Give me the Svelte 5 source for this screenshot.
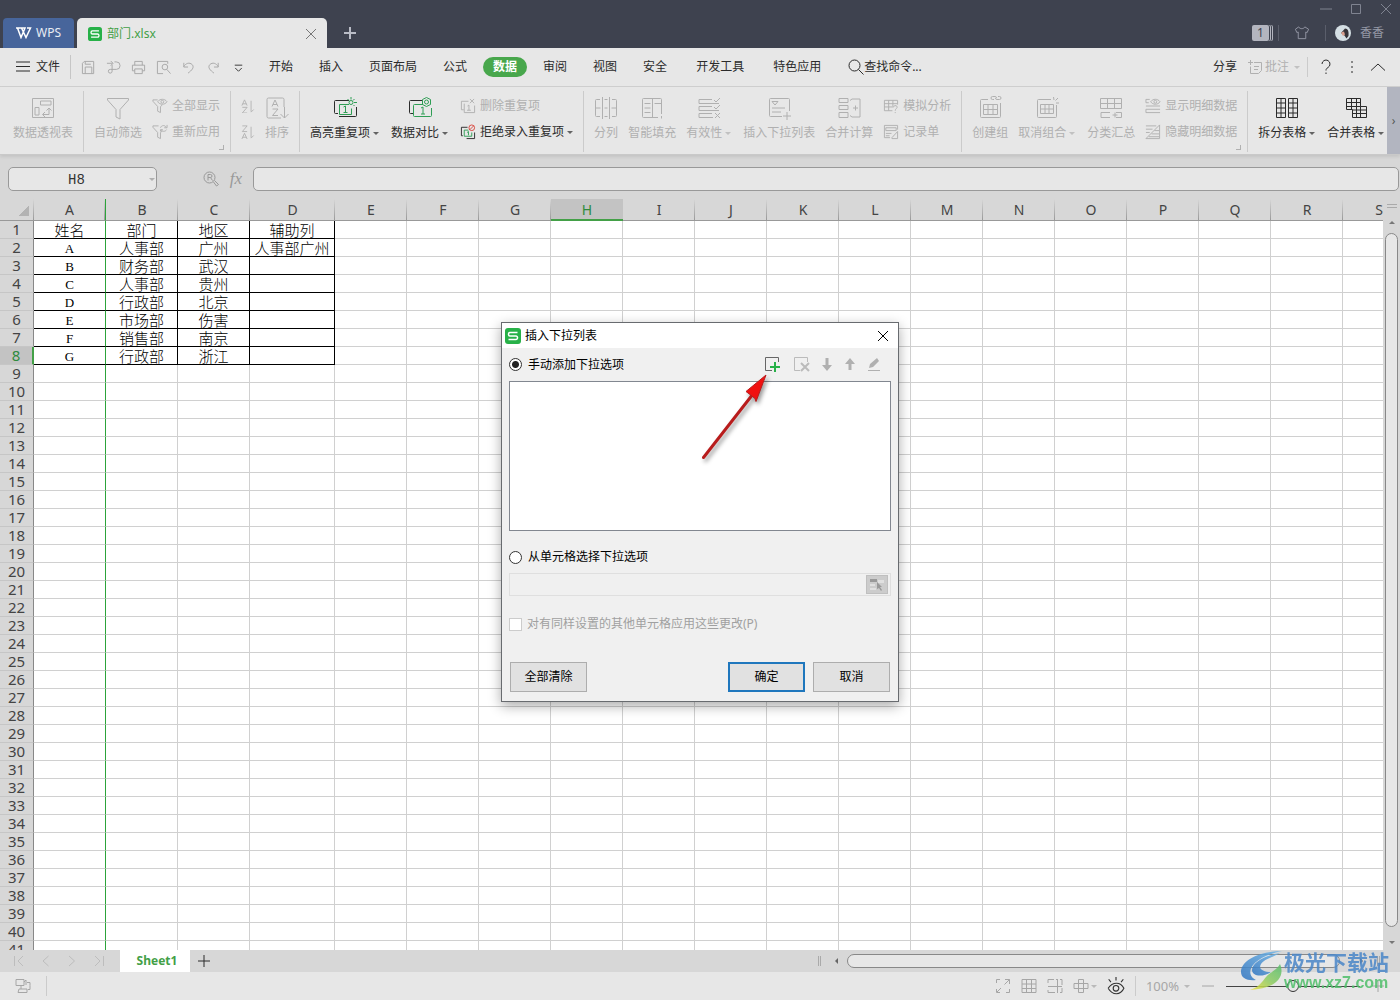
<script lang="ts">
    type Stroke = [string, string?];

    const icons: Record<string, Stroke[]> = {
        menu: [["M1 3h14M1 7.500h14M1 12h14"]],
        save: [["M1.500 14.500V3.500l2-2h10v13zM4.500 14.500v-7h7v7M4.500 1.500v3h6"]],
        export: [["M1 3.500h6M5 1l2.500 2.500L5 6M9 2h2a3.500 3.500 0 0 1 0 8H4.500a2 2 0 1 0 2 2V5"]],
        print: [["M4 5.500v-4h8v4M4 11.500H1.500v-6h13v6H12M4 9.500h8v5H4z"]],
        preview: [["M12.500 4V1.500h-11v13h6M12.500 7.500a3 3 0 1 1-6 0a3 3 0 1 1 6 0M11.500 10l4 4.500"]],
        undo: [["M3 3v4.500h4.500M3 7C5 3.500 9 2 12 5c2.500 3-.5 6-4.500 9"]],
        redo: [["M13 3v4.500H8.500M13 7C11 3.500 7 2 4 5c-2.500 3 .5 6 4.500 9"]],
        custom: [["M4 5.500h8M4.500 8.500l3.500 3.500l3.500-3.500"]],
        search: [["M12 6.500a5.500 5.500 0 1 1-11 0a5.500 5.500 0 1 1 11 0M10.500 10.500L15.500 15.500"]],
        comment: [["M7 3.500h7.500v8l-3 3h-8v-7M1 3.500h5M3.500 1v5M7 7.500h5M7 10.500h4"]],
        help: [["M4 5a4 4 0 1 1 6 3.500c-1.500 1-2 1.500-2 3M8 13.500v1.500"]],
        more: [["M8 2v2M8 7v2M8 12v2"]],
        up: [["M1 11.500L8 5l7 6.500"]],
        shirt: [["M5 2L1.500 4.500L3 8l1.500-.5v7h8v-7L14 8l1.500-3.500L11.500 2c-1 2.500-5.500 2.500-6.500 0z"]],
        pivot: [
            ["M1.500 2.500h21v19h-21zM9.500 5h10.500v4H9.500zM4 11.500h4v7.500H4zM12 18.500h6v-6M14 16l-2.500 2.500L14 21M15.500 14.500L18 12l2.500 2.500"],
        ],
        filter: [["M1.500 2.500h21v1.500l-8.500 9.500v9.500l-4-2v-7.500L1.500 4z"]],
        filterShow: [["M6 2H1v1.500l5 5.500v5l3 1.500V9l2-1.500M6 4c2.500-3.500 7.500-3.500 10 0c-2.500 3.500-7.500 3.500-10 0M12.500 4a1.500 1.500 0 1 1-3 0a1.500 1.500 0 1 1 3 0"]],
        filterRedo: [["M7 2H1v1.500l5 5.500v5l3 1.500V9l2-1.500M9 4c1-3 5-3 6-.5M16 1v3h-3M15.500 6c-1 2-4 2.500-6 .5M9 8V6h2.500"]],
        sortAsc: [["M1 7.500L4 1l3 6.500M2 5.500h4M1.500 9.500H7L1.500 16H7M11.500 2v12.500M11.500 15l3-3"]],
        sortDesc: [["M1.500 1H7L1.500 7.500H7M1 16l3-6.500L7 16M2 14h4M11.500 2v12.500M11.500 15l3-3"]],
        sort: [["M19 11V3.500a1.500 1.500 0 0 0-1.500-1.500h-14A1.500 1.500 0 0 0 2 3.500v17A1.500 1.500 0 0 0 3.500 22H16M7 10.500l3-6.500l3 6.500M8 8.500h4M7.500 13h5.500l-5.500 6.500H13M19.500 11v11M15.500 18l4 4l4-4"]],
        highlight: [
            ["M16 4.500H2.500a1 1 0 0 0-1 1v11a1 1 0 0 0 1 1H5M6 20.500h16.500a1 1 0 0 0 1-1V11"],
            ["M16 8.500H6.500v10h12v-6M10.500 11l2-1v6.500M10.500 16.500h4M20 6.500a2 2 0 1 1-4 0a2 2 0 1 1 4 0M18 3.500V1M14.500 3L16 4.500M21.500 3L20 4.500M21 6.500h3M20.500 9l1 1", "green"],
        ],
        compare: [
            ["M14 4.500H2.500a1 1 0 0 0-1 1v11a1 1 0 0 0 1 1H5"],
            ["M15 8.500H6.500a1 1 0 0 0-1 1v10a1 1 0 0 0 1 1h16a1 1 0 0 0 1-1V12M18.500 1.500l4 2v5l-4 2l-4-2v-5zM20.500 6a2 2 0 1 1-4 0a2 2 0 1 1 4 0M13 12l2-1v7M13 18h4", "green"],
        ],
        dedupe: [["M9 3.500H1.500v9H4M4.500 6v9.500h11V8M8 8.500l1.500-1v5.500M7.500 13h4M10.500 1l4.500 4.500M15 1l-4.500 4.500"]],
        reject: [
            ["M8 3.500H1.500v9H3M7 15.500h8.500V9"],
            ["M9 6.500H4.500v6.500h8V9M7.500 9l1.500-1v4", "green"],
            ["M15.500 4a3 3 0 1 1-6 0a3 3 0 1 1 6 0M10.500 6l4-4", "red"],
        ],
        columns: [["M6 3.500H2.500a1 1 0 0 0-1 1v15a1 1 0 0 0 1 1H6M18 3.500h3.500a1 1 0 0 1 1 1v15a1 1 0 0 1-1 1H18M8.500 1v22M15.500 1v22M1.500 12h5M10.500 12h3M17.500 12h5M12 3.500h-1.500M12 3.500h1.500M10.500 20.500h3"]],
        smartFill: [["M21.500 18V3.500a1 1 0 0 0-1-1h-17a1 1 0 0 0-1 1v17a1 1 0 0 0 1 1H18M12.500 2.500v19M4.500 7.500h6M4.500 12h6M4.500 16.500h6M14.500 7.500h7M21.500 20v2.500"]],
        validity: [["M15 3.500H2v4h20M15 10.500H2v4h20M15 17.500H2v4h14M17 4l2 2l4-4M17 11l2 2l4-4M18 17l5 5M23 17l-5 5"]],
        dropdown: [["M22.500 15V3.500a1 1 0 0 0-1-1h-18a1 1 0 0 0-1 1v16a1 1 0 0 0 1 1H15M5 5.500h6L8 9zM5 12h13M5 16h9M20 16v8M16 20h8"]],
        consolidate: [["M2 2.500h9v4H2zM2 9.500h9v4H2zM2 16.500h9v5H2zM13 4.500l2-1.500h8v18h-8l-2-1.500M16 12h5M18.500 9.500v5"]],
        whatIf: [["M15.500 7V2.500h-14v11H10M1.500 6h14M1.500 9.500h9M6 2.500v11M10.500 2.500V9M11 10c0-2.500 4.500-2.500 4 0c-.5 1.500-2 1.500-2 3.500M13 15v1"]],
        form: [["M15.500 6V1.500h-14v13h6M3 4h11v3H3zM3 10h6M3 12.500h4M15.500 8l-6 6.500v1h6z"]],
        group: [["M10 3.500H3.500a1 1 0 0 0-1 1v16a1 1 0 0 0 1 1h18a1 1 0 0 0 1-1V7M5.500 8.500h14v10h-14zM5.500 13.500h14M10 8.500v10M15 8.500v10M16 3.500h-1.500a1.500 1.500 0 0 1 0-3H17a1.500 1.500 0 0 1 1.500 1.500M20 .5h1.500a1.500 1.500 0 0 1 0 3H19A1.500 1.500 0 0 1 17.500 2"]],
        ungroup: [["M16 3.500H3.500a1 1 0 0 0-1 1v16a1 1 0 0 0 1 1h17a1 1 0 0 0 1-1V9M5.500 8.500h13v9h-13zM5.500 13h13M10 8.500v9M14 8.500v9M18.500 1l.5 3M23 2l-2.500 2.500M24 7h-3"]],
        subtotal: [["M1.500 2.500h21v10h-21zM1.500 7.500h21M8.500 2.500v10M15.500 2.500v10M11 16.500H2v5h9M17 16.500h5.500v5H17M16 16.500v5M13.500 19h5"]],
        showDetail: [["M5 1.500H1v3.500h3M1 8.500h15M1 12h15M1 15.500h15M1 12v3.500M6 4c2.500-3.500 7.500-3.500 10 0c-2.500 3.500-7.500 3.500-10 0M12.500 4a1.500 1.500 0 1 1-3 0a1.500 1.500 0 1 1 3 0"]],
        hideDetail: [["M1 2h11M1 5.500h7M1 9h4M1 15.500L15.500 1v14.500zM10 7h5M7 10.500h8M4 13.500h11"]],
        splitTable: [["M1.500 2.500h9v19h-9zM6 2.500v19M1.500 7h9M1.500 12h9M1.500 17h9M13.500 2.500h9v19h-9zM18 2.500v19M13.500 7h9M13.500 12h9M13.500 17h9"]],
        mergeTable: [["M2.500 2.500h14v8h6v11h-14v-8h-6zM7.500 2.500v11M12.500 2.500v19M16.500 10.500v11M2.500 6.500h14M2.500 10.500h14M8.500 14h14M8.500 17.500h14"]],
        full: [["M1.500 5V1.500H5M1.500 11v3.500H5M11 14.500h3.500V11M9.500 6.500l5-5M10 1.500h4.500V6M6 10l-4 4"]],
        grid: [["M1 1.500h14v13H1zM1 6h14M1 10.500h14M5.500 1.500v13M10.500 1.500v13"]],
        page: [["M10.500 1v14M1 8.500h14M1 5V1.500h6M9 1.500h1M1 12v2.500h7M13 1.500h2V7M15 10v4.500h-2"]],
        cross: [["M5.500 1.500h5v13h-5zM1 5.500h14v5H1z"]],
        eye: [["M1 10c4-6 11-6 14 0c-3 6.500-10 6.500-14 0M10.500 10a2.500 2.500 0 1 1-5 0a2.500 2.500 0 1 1 5 0M8 3V0M3.500 4.500L1.500 2M12.500 4.500l2-2.500"]],
        task: [["M1 1.500h8v6H1zM9 4l2-2v5M12 4.500h3v3M15 7.500v4h-2M4 11h8v3.500H3zM6 7.500V11"]],
        find: [["M12 6.500a5.500 5.500 0 1 1-11 0a5.500 5.500 0 1 1 11 0M5 9.500v-6h2.500a1.500 1.500 0 0 1 0 3H5M7.500 6.500l2 3M10.500 11l3 4l2-1.500l-4-4"]],
        plus: [["M2 8h12M8 2v12"]],
        minus: [["M2 8h12"]],
        close: [["M3 3l10 10M13 3L3 13"]],
        maximize: [["M3.500 3.500h9v9h-9z"]],
        first: [["M2.500 3v10M11 3L6 8l5 5"]],
        prev: [["M10.500 3L5 8l5.500 5"]],
        next: [["M5 3l5.500 5L5 13"]],
        last: [["M13.500 3v10M5 3l5 5l-5 5"]],
    };

    const quick = ["save", "export", "print", "preview", "undo", "redo", "custom"];
    const tabs = ["开始", "插入", "页面布局", "公式", "数据", "审阅", "视图", "安全", "开发工具", "特色应用"];
    let activeTab = $state("数据");

    type Tool = { icon: string; label: string; caret?: boolean; on?: boolean };
    type Part = Tool | Tool[];
    type Group = { parts: Part[]; corner?: boolean };

    const groups: Group[] = [
        { parts: [{ icon: "pivot", label: "数据透视表" }] },
        {
            corner: true,
            parts: [
                { icon: "filter", label: "自动筛选" },
                [
                    { icon: "filterShow", label: "全部显示" },
                    { icon: "filterRedo", label: "重新应用" },
                ],
            ],
        },
        {
            parts: [
                [
                    { icon: "sortAsc", label: "" },
                    { icon: "sortDesc", label: "" },
                ],
                { icon: "sort", label: "排序" },
            ],
        },
        {
            parts: [
                { icon: "highlight", label: "高亮重复项", caret: true, on: true },
                { icon: "compare", label: "数据对比", caret: true, on: true },
                [
                    { icon: "dedupe", label: "删除重复项" },
                    { icon: "reject", label: "拒绝录入重复项", caret: true, on: true },
                ],
            ],
        },
        {
            parts: [
                { icon: "columns", label: "分列" },
                { icon: "smartFill", label: "智能填充" },
                { icon: "validity", label: "有效性", caret: true },
                { icon: "dropdown", label: "插入下拉列表" },
                { icon: "consolidate", label: "合并计算" },
                [
                    { icon: "whatIf", label: "模拟分析" },
                    { icon: "form", label: "记录单" },
                ],
            ],
        },
        {
            corner: true,
            parts: [
                { icon: "group", label: "创建组" },
                { icon: "ungroup", label: "取消组合", caret: true },
                { icon: "subtotal", label: "分类汇总" },
                [
                    { icon: "showDetail", label: "显示明细数据" },
                    { icon: "hideDetail", label: "隐藏明细数据" },
                ],
            ],
        },
        {
            parts: [
                { icon: "splitTable", label: "拆分表格", caret: true, on: true },
                { icon: "mergeTable", label: "合并表格", caret: true, on: true },
            ],
        },
    ];

    const columns = "ABCDEFGHIJKLMNOPQRS".split("");
    const rowCount = 41;
    const cells = [
        ["姓名", "部门", "地区", "辅助列"],
        ["A", "人事部", "广州", "人事部广州"],
        ["B", "财务部", "武汉", ""],
        ["C", "人事部", "贵州", ""],
        ["D", "行政部", "北京", ""],
        ["E", "市场部", "伤害", ""],
        ["F", "销售部", "南京", ""],
        ["G", "行政部", "浙江", ""],
    ];

    let dialogOpen = $state(true);
    let source = $state("manual");
    let zoom = $state(50);
</script>

{#snippet icon(name: string, size: number, box: number = size)}
    <svg class="icon" width={size} height={size} viewBox="0 0 {box} {box}" aria-hidden="true">
        {#each icons[name] as [d, color]}
            <path {d} class={color} />
        {/each}
    </svg>
{/snippet}

{#snippet logo(size: number)}
    <svg width={size} height={size} viewBox="0 0 16 16" aria-hidden="true">
        <rect width="16" height="16" rx="3" fill="#27b148" />
        <path d="M12.500 4.500H5a1.500 1.500 0 0 0-1.500 1.500v.5A1.500 1.500 0 0 0 5 8h6a1.500 1.500 0 0 1 1.500 1.500v.5a1.500 1.500 0 0 1-1.500 1.500H3.500" fill="none" stroke="#fff" stroke-width="1.500" />
    </svg>
{/snippet}

<div class="app">
    <header class="titlebar">
        <button class="wps">
            <svg width="16" height="12" viewBox="0 0 16 12" aria-hidden="true">
                <path d="M0 1h5M1.500 1l3.500 9.500L9 1h-3.500l4.500 9.500L14.500 1H11" fill="none" stroke="#fff" stroke-width="1.500" />
            </svg>
            WPS
        </button>
        <div class="doc-tab">
            {@render logo(14)}
            <span>部门.xlsx</span>
            <button aria-label="关闭">{@render icon("close", 16)}</button>
        </div>
        <button class="new-tab" aria-label="新建">{@render icon("plus", 16)}</button>
        <div class="title-right">
            <div class="window-buttons">
                <button aria-label="最小化">{@render icon("minus", 16)}</button>
                <button aria-label="最大化">{@render icon("maximize", 16)}</button>
                <button aria-label="关闭窗口">{@render icon("close", 16)}</button>
            </div>
            <div class="user">
                <span class="badge">1</span>
                <i class="rule"></i>
                <button aria-label="皮肤">{@render icon("shirt", 16, 17)}</button>
                <i class="rule"></i>
                <svg class="avatar" width="16" height="16" viewBox="0 0 16 16" aria-hidden="true">
                    <circle cx="8" cy="8" r="8" fill="#d5dfe4" />
                    <path d="M6 8l4-4.500c3 0 4 3 3.500 7.500l-2 2.500l-2-3z" fill="#363338" />
                    <path d="M6 7.500l3-1l1 3l-2 1.500z" fill="#d99f8d" />
                </svg>
                <span>香香</span>
            </div>
        </div>
    </header>

    <nav class="menubar">
        <button class="file">{@render icon("menu", 16)}文件</button>
        <div class="quick">
            {#each quick as name}
                <button class:dark={name === "custom"} aria-label={name}>{@render icon(name, 15, 16)}</button>
            {/each}
        </div>
        <div class="tabs">
            {#each tabs as tab, i}
                <button
                    class:active={tab === activeTab}
                    class:extra={i > 7}
                    onclick={() => (activeTab = tab)}><span>{tab}</span></button
                >
            {/each}
        </div>
        <button class="search">{@render icon("search", 16)}查找命令...</button>
        <div class="menu-right">
            <button>分享</button>
            <button class="off">{@render icon("comment", 16)}批注<i class="caret"></i></button>
            <i class="rule"></i>
            <button aria-label="帮助">{@render icon("help", 16)}</button>
            <button class="more" aria-label="更多">{@render icon("more", 16)}</button>
            <button aria-label="收起">{@render icon("up", 16)}</button>
        </div>
    </nav>

    <div class="ribbon">
        {#each groups as group}
            <div class="group">
                {#each group.parts as part}
                    {#if Array.isArray(part)}
                        <div class="stack">
                            {#each part as tool}
                                <button class="small" class:off={!tool.on} aria-label={tool.label || tool.icon}>
                                    {@render icon(tool.icon, tool.label ? 16 : 14, tool.label ? 17 : 16)}
                                    {#if tool.label}<span>{tool.label}</span>{/if}
                                    {#if tool.caret}<i class="caret"></i>{/if}
                                </button>
                            {/each}
                        </div>
                    {:else}
                        <button class="big" class:off={!part.on} class:wide={part.caret}>
                            {@render icon(part.icon, 24)}
                            <span>{part.label}{#if part.caret}<i class="caret"></i>{/if}</span>
                        </button>
                    {/if}
                {/each}
                {#if group.corner}<i class="corner"></i>{/if}
            </div>
        {/each}
        <button class="scroll-right" aria-label="更多工具">›</button>
    </div>

    <div class="formula">
        <div class="name-box">
            <input value="H8" aria-label="名称框" />
            <i class="caret"></i>
        </div>
        <button class="find" aria-label="浏览">{@render icon("find", 16)}</button>
        <button class="fx">fx</button>
        <input class="formula-input" aria-label="编辑栏" />
    </div>

    <main>
        <div class="sheet">
            <table>
                <colgroup>
                    <col class="col-head" />
                    {#each columns as column}
                        <col class:col-wide={column === "D"} />
                    {/each}
                </colgroup>
                <thead>
                    <tr>
                        <th class="corner-cell"></th>
                        {#each columns as column}
                            <th class:selected={column === "H"} class:frozen={column === "A"}>{column}</th>
                        {/each}
                    </tr>
                </thead>
                <tbody>
                    {#each Array(rowCount) as _, r}
                        <tr>
                            <th class:selected={r === 7}>{r + 1}</th>
                            {#each columns as column, c}
                                <td class:filled={r < 8 && c < 4} class:frozen={c === 0}>{cells[r]?.[c] ?? ""}</td>
                            {/each}
                        </tr>
                    {/each}
                </tbody>
            </table>
        </div>
        <div class="v-scroll">
            <i class="split"></i>
            <i class="arrow-up"></i>
            <i class="thumb"></i>
            <i class="arrow-down"></i>
        </div>
    </main>

    <div class="sheet-bar">
        <div class="sheet-nav">
            {#each ["first", "prev", "next", "last"] as name}
                <button aria-label={name}>{@render icon(name, 16)}</button>
            {/each}
        </div>
        <button class="sheet-tab">Sheet1</button>
        <button class="add-sheet" aria-label="新建工作表">{@render icon("plus", 16)}</button>
        <div class="h-scroll">
            <i class="grip"></i>
            <i class="arrow-left"></i>
            <i class="thumb"></i>
            <i class="arrow-right"></i>
            <i class="grip"></i>
        </div>
    </div>

    <footer>
        <button class="task" aria-label="任务">{@render icon("task", 16)}</button>
        <i class="rule"></i>
        <div class="views">
            <button aria-label="全屏">{@render icon("full", 16)}</button>
            <button aria-label="普通视图">{@render icon("grid", 16)}</button>
            <button aria-label="分页预览">{@render icon("page", 16)}</button>
            <button aria-label="阅读模式">{@render icon("cross", 16)}<i class="caret"></i></button>
            <button class="dark" aria-label="护眼模式">{@render icon("eye", 18, 16)}</button>
            <i class="rule"></i>
            <button class="percent">100%<i class="caret"></i></button>
            <button aria-label="缩小">{@render icon("minus", 16)}</button>
            <input type="range" bind:value={zoom} aria-label="缩放" />
            <button aria-label="放大">{@render icon("plus", 16)}</button>
        </div>
    </footer>

    {#if dialogOpen}
        <div class="dialog" role="dialog" aria-label="插入下拉列表">
            <div class="dialog-title">
                {@render logo(16)}
                <span>插入下拉列表</span>
                <button aria-label="关闭对话框" onclick={() => (dialogOpen = false)}>{@render icon("close", 16)}</button>
            </div>
            <div class="dialog-body">
                <div class="option-row">
                    <label><input type="radio" value="manual" bind:group={source} />手动添加下拉选项</label>
                    <div class="option-tools">
                        <button aria-label="添加">
                            <svg width="18" height="18" viewBox="0 0 18 18">
                                <path d="M9 14.500H2.500v-13h13V6" fill="none" stroke="#666" />
                                <path d="M12 6v10M7 11h10" fill="none" stroke="#27b148" stroke-width="2" />
                            </svg>
                        </button>
                        <button aria-label="删除">
                            <svg width="18" height="18" viewBox="0 0 18 18">
                                <path d="M8 14.500H2.500v-13h13V6" fill="none" stroke="#bbb" />
                                <path d="M9 7l8 8M17 7l-8 8" fill="none" stroke="#bbb" stroke-width="2" />
                            </svg>
                        </button>
                        <button aria-label="下移">
                            <svg width="12" height="18" viewBox="0 0 12 18">
                                <path d="M4.500 2h3v7H11l-5 6l-5-6h3.500z" fill="#b0b0b0" />
                            </svg>
                        </button>
                        <button aria-label="上移">
                            <svg width="12" height="18" viewBox="0 0 12 18">
                                <path d="M4.500 14h3V8H11L6 2L1 8h3.500z" fill="#b0b0b0" />
                            </svg>
                        </button>
                        <button aria-label="编辑">
                            <svg width="14" height="18" viewBox="0 0 14 18">
                                <path d="M2 12l1-4l7-6l2 3l-6 6zM1 14h12v1H1z" fill="#b0b0b0" />
                            </svg>
                        </button>
                    </div>
                </div>
                <div class="list"></div>
                <label class="cells-option"
                    ><input type="radio" value="cells" bind:group={source} />从单元格选择下拉选项</label
                >
                <div class="range">
                    <input aria-label="单元格区域" disabled />
                    <button aria-label="选择区域" disabled>
                        <svg width="16" height="14" viewBox="0 0 16 14">
                            <path d="M1 1h7v3H1z" fill="#999" />
                            <path d="M9 2h6v3H9zM1 6h5v2H1zM1 10h6v2H1z" fill="#e0e0e0" />
                            <path d="M8 4l5 5h-2l2 3l-1 1l-2-3l-2 1z" fill="#999" />
                        </svg>
                    </button>
                </div>
                <label class="apply"><input type="checkbox" disabled />对有同样设置的其他单元格应用这些更改(P)</label>
                <div class="actions">
                    <button>全部清除</button>
                    <button class="primary">确定</button>
                    <button>取消</button>
                </div>
            </div>
            <svg class="pointer" width="80" height="96" viewBox="0 0 80 96" aria-hidden="true">
                <path d="M4.500 86.500L54 23" stroke="#b81c1c" stroke-width="3" stroke-linecap="round" />
                <path d="M67 4L47 20.500L51 23.500L56 27.500L57 30.500z" fill="#f01010" stroke="#b81c1c" />
            </svg>
        </div>
    {/if}

    <div class="watermark">
        <svg width="44" height="42" viewBox="0 0 44 42" aria-hidden="true">
            <defs>
                <linearGradient id="leaf" x1="0" y1="1" x2="1" y2="0">
                    <stop offset="0" stop-color="#f0e13a" />
                    <stop offset="0.500" stop-color="#8ccb62" />
                    <stop offset="1" stop-color="#56bd6e" />
                </linearGradient>
                <linearGradient id="wing" x1="0" y1="1" x2="1" y2="0">
                    <stop offset="0" stop-color="#2f74c0" />
                    <stop offset="1" stop-color="#6fb6e8" />
                </linearGradient>
            </defs>
            <path d="M42 1C22 1 1 9 1 22c0 6 6 9 15 8C6 26 6 9 42 1z" fill="url(#wing)" />
            <path d="M40 3C26 5 12 12 12 20c0 6 10 8 19 2c-8 0-13-3-10-8c3-5 13-7 19-11z" fill="url(#wing)" />
            <path d="M40 14c6 14-6 25-30 26c9-3 12-8 16-13c4-5 10-6 14-13z" fill="url(#leaf)" />
        </svg>
        <div>
            <strong>极光下载站</strong>
            <em>www.xz7.com</em>
        </div>
    </div>
</div>

<style>
    :global(body) {
        margin: 0;
        overflow: hidden;
    }

    .app {
        position: relative;
        display: flex;
        flex-direction: column;
        height: 100vh;
        overflow: hidden;
        background: #e7e7e7;
        color: #2b2b2b;
        font-family: "Noto Sans", "Noto Sans CJK SC", sans-serif;
        font-size: 12px;
        line-height: 16px;
        white-space: nowrap;
    }

    button {
        display: flex;
        align-items: center;
        justify-content: center;
        margin: 0;
        padding: 0;
        border: 0;
        background: none;
        color: inherit;
        font: inherit;
        white-space: nowrap;
    }

    input {
        box-sizing: border-box;
        margin: 0;
        font: inherit;
    }

    .icon {
        flex: none;
        fill: none;
        stroke: currentColor;
    }

    .green {
        stroke: #2f9e55;
    }

    .red {
        stroke: #d9483f;
    }

    .off {
        color: #b0b0b0;
    }

    .dark {
        color: #333;
    }

    .rule {
        width: 1px;
        height: 20px;
        background: #cbcbcb;
    }

    .caret {
        display: inline-block;
        margin-left: 3px;
        border: 3px solid transparent;
        border-top-color: currentColor;
        border-bottom: 0;
        vertical-align: middle;
        opacity: 0.7;
    }

    .titlebar {
        display: flex;
        align-items: flex-end;
        height: 48px;
        flex: none;
        background: #3e424f;
        color: #b9bcc6;
    }

    .wps {
        gap: 4px;
        width: 71px;
        height: 30px;
        margin: 0 3px;
        border-radius: 4px 4px 0 0;
        background: #47659b;
        color: #e8ecf4;
    }

    .doc-tab {
        display: flex;
        align-items: center;
        gap: 5px;
        box-sizing: border-box;
        width: 250px;
        height: 30px;
        padding: 1px 8px 0 11px;
        border-radius: 5px 5px 0 0;
        background: #e7e7e7;
        color: #43a047;
    }

    .doc-tab button {
        margin-left: auto;
        color: #777;
    }

    .new-tab {
        width: 46px;
        height: 30px;
    }

    .new-tab .icon {
        stroke-width: 2;
    }

    .title-right {
        display: flex;
        flex-direction: column;
        margin-left: auto;
        height: 48px;
        color: #9498a5;
    }

    .window-buttons {
        display: flex;
        justify-content: flex-end;
        gap: 14px;
        height: 18px;
        padding-right: 6px;
        color: #7f8390;
    }

    .user {
        display: flex;
        align-items: center;
        gap: 9px;
        height: 30px;
        padding-right: 16px;
    }

    .user button {
        margin: 0 6px;
    }

    .user .rule {
        height: 16px;
        background: #5a5e6b;
    }

    .badge {
        width: 17px;
        border-radius: 2px;
        background: #b3b5bf;
        box-shadow: 1px 0 #3e424f, 2px 0 #b3b5bf, 3px 0 #3e424f, 4px 0 #b3b5bf;
        color: #3e424f;
        text-align: center;
    }

    .menubar {
        display: flex;
        align-items: center;
        flex: none;
        height: 38px;
        border-bottom: 1px solid #cfcfcf;
    }

    .file {
        gap: 5px;
        width: 71px;
        padding-left: 5px;
        box-sizing: border-box;
        border-right: 1px solid #c6c6c6;
        height: 24px;
    }

    .quick {
        display: flex;
        gap: 10px;
        padding: 0 10px;
        color: #a6a6a6;
    }

    .tabs {
        display: flex;
    }

    .tabs button {
        padding: 0 3px;
        height: 20px;
    }

    .tabs span {
        padding: 0 10px;
        border-radius: 10px;
        line-height: 20px;
    }

    .tabs .active span {
        background: #48a74c;
        color: #fff;
        font-weight: 700;
    }

    .tabs .extra {
        padding-left: 6px;
    }

    .search {
        margin-left: 14px;
    }

    .menu-right {
        display: flex;
        align-items: center;
        gap: 10px;
        margin-left: auto;
        padding-right: 14px;
    }

    .menu-right .off {
        gap: 2px;
    }

    .menu-right .rule {
        margin-left: -3px;
    }

    .ribbon {
        display: flex;
        flex: none;
        height: 67px;
        padding-left: 3px;
        border-bottom: 1px solid #c9c9c9;
        box-shadow: 0 2px 3px #c4c4c4;
        z-index: 1;
    }

    .group {
        position: relative;
        display: flex;
        gap: 10px;
        margin: 4px 0 2px;
        padding: 0 10px;
        border-right: 1px solid #cbcbcb;
    }

    .group:nth-last-child(2) {
        border-right: 0;
        padding-right: 0;
    }

    .big {
        flex-direction: column;
        justify-content: flex-start;
        gap: 5px;
        padding-top: 5px;
    }

    .big.wide {
        padding-right: 2px;
    }

    .stack {
        display: flex;
        flex-direction: column;
        gap: 6px;
        padding-top: 5px;
    }

    .small {
        justify-content: flex-start;
        height: 20px;
    }

    .small span {
        margin-left: 4px;
    }

    .corner {
        position: absolute;
        right: 6px;
        bottom: 2px;
        width: 4px;
        height: 4px;
        border: solid #b0b0b0;
        border-width: 0 1px 1px 0;
    }

    .scroll-right {
        width: 13px;
        margin-left: auto;
        background: #b2b5c0;
        color: #555;
    }

    .formula {
        display: flex;
        align-items: center;
        flex: none;
        height: 32px;
        padding: 8px 1px 4px 8px;
        background: #d7d7d7;
        color: #999;
    }

    .name-box {
        position: relative;
        width: 149px;
    }

    .name-box .caret {
        position: absolute;
        right: 2px;
        top: 11px;
    }

    .formula input {
        width: 100%;
        height: 24px;
        border: 1px solid #999;
        border-radius: 5px;
        background: #e7e7e7;
        color: #333;
    }

    .name-box input {
        padding: 2px 12px 0 0;
        font: 14px "Liberation Mono", monospace;
        text-align: center;
    }

    .find {
        margin-left: 46px;
    }

    .fx {
        width: 34px;
        font: italic 17px "Liberation Serif", serif;
    }

    .formula-input {
        flex: 1;
    }

    main {
        display: flex;
        flex: 1;
        min-height: 0;
        background: #d7d7d7;
    }

    .sheet {
        flex: 1;
        min-width: 0;
        overflow: hidden;
    }

    table {
        width: 1px;
        table-layout: fixed;
        border-spacing: 0;
        background: #fff;
    }

    col {
        width: 72px;
    }

    .col-head {
        width: 34px;
    }

    .col-wide {
        width: 85px;
    }

    th,
    td {
        box-sizing: border-box;
        height: 18px;
        padding: 0;
        line-height: 17px;
    }

    th {
        border-bottom: 1px solid #c6c6c6;
        background: #d7d7d7;
        color: #444;
        font-size: 15px;
        font-weight: 400;
    }

    thead th {
        height: 22px;
        border-bottom-color: #999;
        background: linear-gradient(#d7d7d7, #999) right / 1px 100% no-repeat #d7d7d7;
        font-size: 14px;
    }

    thead .corner-cell {
        background:
            linear-gradient(#d7d7d7, #999) right / 1px 100% no-repeat,
            linear-gradient(135deg, transparent 50%, #b3b3b3 50%) 18px 6px / 11px 11px no-repeat #d7d7d7;
    }

    tbody th {
        border-right: 1px solid #888;
    }

    th.selected {
        background: #c3c3c3;
        color: #2e8b3d;
    }

    thead .selected {
        border-bottom: 2px solid #43a047;
    }

    tbody .selected {
        border-right: 2px solid #43a047;
    }

    td {
        padding-top: 3px;
        border: solid #d0d0d0;
        border-width: 0 1px 1px 0;
        color: #000;
        font-family: "Liberation Serif", "Noto Sans CJK SC", serif;
        font-size: 15px;
        font-weight: 300;
        line-height: 14px;
        text-align: center;
    }

    td.filled {
        border-color: #000;
    }

    td.frozen,
    th.frozen {
        border-right: 1px solid #2ca33a;
    }

    td.frozen {
        font-size: 13px;
    }

    tr:first-child td.frozen {
        font-size: 15px;
    }

    .v-scroll {
        display: flex;
        flex-direction: column;
        align-items: center;
        width: 17px;
        padding: 5px 0 6px;
        box-sizing: border-box;
    }

    .split {
        width: 10px;
        height: 2px;
        border: solid #aaa;
        border-width: 1px 0;
    }

    .arrow-up,
    .arrow-down {
        margin: 13px 0 9px;
        border: 3px solid transparent;
        border-bottom-color: #777;
        border-top: 0;
    }

    .arrow-down {
        margin: 14px 0 0;
        border-top: 3px solid #777;
        border-bottom: 0;
    }

    .thumb {
        box-sizing: border-box;
        border: 1px solid #888;
        border-radius: 7px;
        background: #e7e7e7;
    }

    .v-scroll .thumb {
        flex: 1;
        width: 13px;
    }

    .sheet-bar {
        display: flex;
        align-items: center;
        flex: none;
        height: 22px;
        background: #d7d7d7;
    }

    .sheet-nav {
        display: flex;
        gap: 10px;
        width: 108px;
        padding-left: 12px;
        color: #bdbdbd;
    }

    .sheet-tab {
        width: 70px;
        height: 22px;
        padding-left: 4px;
        box-sizing: border-box;
        background: #fff;
        color: #43a047;
        font-weight: 700;
    }

    .add-sheet {
        width: 28px;
    }

    .h-scroll {
        display: flex;
        align-items: center;
        width: 582px;
        margin-left: auto;
        padding-right: 20px;
        box-sizing: border-box;
    }

    .h-scroll .thumb {
        flex: 1;
        height: 14px;
    }

    .grip {
        width: 1px;
        height: 10px;
        border: solid #aaa;
        border-width: 0 1px;
    }

    .arrow-left,
    .arrow-right {
        margin: 0 9px 0 14px;
        border: 3px solid transparent;
        border-right-color: #666;
        border-left: 0;
    }

    .arrow-right {
        margin: 0 14px 0 20px;
        border-left: 3px solid #666;
        border-right: 0;
    }

    footer {
        display: flex;
        align-items: center;
        flex: none;
        height: 28px;
        color: #a6a6a6;
    }

    .task {
        width: 46px;
    }

    .views {
        display: flex;
        align-items: center;
        gap: 10px;
        margin-left: auto;
        padding-right: 14px;
    }

    .views .caret {
        margin-left: 2px;
    }

    .percent {
        font-size: 13px;
    }

    .percent .caret {
        margin-left: 5px;
    }

    input[type="range"] {
        appearance: none;
        width: 134px;
        height: 14px;
        background: linear-gradient(#444, #444) center / 100% 1px no-repeat;
    }

    input[type="range"]::-webkit-slider-thumb {
        appearance: none;
        box-sizing: border-box;
        width: 12px;
        height: 12px;
        border: 1px solid #333;
        border-radius: 50%;
        background: #e7e7e7;
    }

    .dialog {
        position: absolute;
        top: 322px;
        left: 50%;
        z-index: 2;
        box-sizing: border-box;
        width: 398px;
        margin-left: -199px;
        border: 1px solid #686b6f;
        background: #f0f0f0;
        box-shadow: 0 4px 12px #0005;
        color: #000;
    }

    .dialog-title {
        display: flex;
        align-items: center;
        gap: 4px;
        height: 25px;
        padding: 0 7px 0 3px;
        background: #fff;
    }

    .dialog-title button {
        margin-left: auto;
    }

    .dialog-body {
        padding: 0 7px 9px;
    }

    .option-row {
        display: flex;
        align-items: center;
        justify-content: space-between;
        height: 33px;
    }

    .option-tools {
        display: flex;
        gap: 11px;
        padding-right: 10px;
    }

    label {
        display: flex;
        align-items: center;
        gap: 6px;
    }

    label input {
        appearance: none;
        width: 13px;
        height: 13px;
        border: 1px solid #333;
        background: #fff;
    }

    label input[type="radio"] {
        border-radius: 50%;
    }

    label input[type="radio"]:checked {
        background: radial-gradient(#222 3px, #fff 4px);
    }

    .list {
        box-sizing: border-box;
        height: 150px;
        border: 1px solid #828790;
        background: #fff;
    }

    .cells-option {
        margin-top: 18px;
    }

    .range {
        display: flex;
        align-items: center;
        box-sizing: border-box;
        height: 23px;
        margin-top: 8px;
        border: 1px solid #dfdfdf;
    }

    .range input {
        flex: 1;
        border: 0;
        background: none;
    }

    .range button {
        box-sizing: border-box;
        width: 22px;
        height: 19px;
        margin-right: 2px;
        border: 1px solid #bfbfbf;
        background: #ccc;
    }

    .apply {
        margin-top: 20px;
        gap: 5px;
        color: #a0a0a0;
    }

    .apply input {
        border-color: #ccc;
    }

    .actions {
        display: flex;
        gap: 8px;
        margin-top: 30px;
        padding: 0 1px;
    }

    .actions button {
        box-sizing: border-box;
        width: 77px;
        height: 30px;
        border: 1px solid #adadad;
        background: #e1e1e1;
    }

    .actions .primary {
        margin-left: auto;
        border: 2px solid #1f77bd;
    }

    .pointer {
        position: absolute;
        top: 48px;
        left: 197px;
        filter: drop-shadow(2px 3px 2px #0006);
        pointer-events: none;
    }

    .watermark {
        position: absolute;
        right: 11px;
        bottom: 8px;
        z-index: 3;
        display: flex;
        align-items: center;
        opacity: 0.85;
        pointer-events: none;
    }

    .watermark div {
        display: flex;
        flex-direction: column;
    }

    .watermark strong {
        color: #4a86c8;
        font-size: 21px;
        line-height: 24px;
    }

    .watermark em {
        color: #4fbf6a;
        font: 700 16px/18px "Liberation Sans", sans-serif;
    }
</style>
